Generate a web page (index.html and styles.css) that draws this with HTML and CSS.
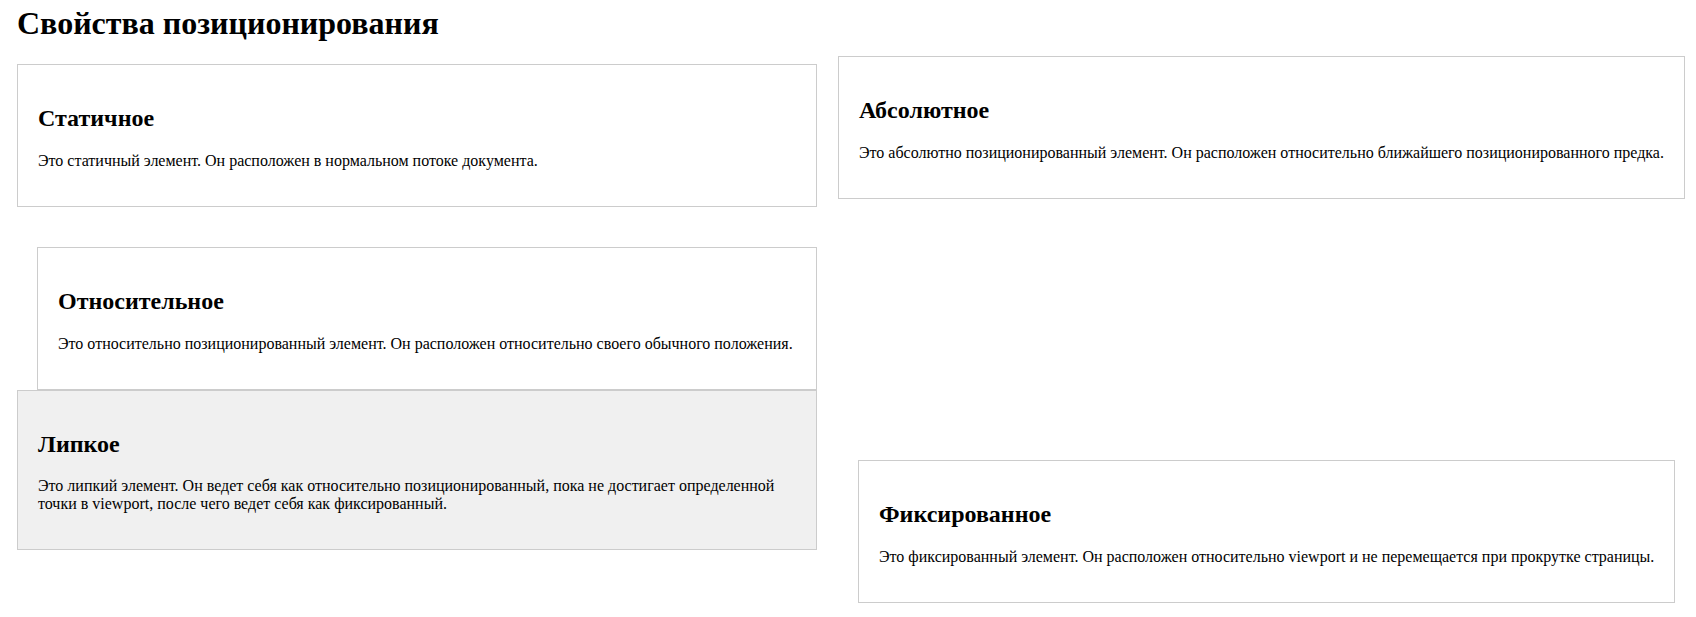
FILE: index.html
```html
<!DOCTYPE html>
<html lang="ru">
<head>
<meta charset="utf-8">
<title>Свойства позиционирования</title>
<link rel="stylesheet" href="styles.css">
</head>
<body>
<h1 class="page-title">Свойства позиционирования</h1>
<div class="layout">
  <div class="col-left">
    <div class="box box-static">
      <h2>Статичное</h2>
      <p>Это статичный элемент. Он расположен в нормальном потоке документа.</p>
    </div>
    <div class="box box-relative">
      <h2>Относительное</h2>
      <p>Это относительно позиционированный элемент. Он расположен относительно своего обычного положения.</p>
    </div>
    <div class="box box-sticky">
      <h2>Липкое</h2>
      <p>Это липкий элемент. Он ведет себя как относительно позиционированный, пока не достигает определенной точки в viewport, после чего ведет себя как фиксированный.</p>
    </div>
  </div>
  <div class="col-right">
    <div class="box box-absolute">
      <h2>Абсолютное</h2>
      <p>Это абсолютно позиционированный элемент. Он расположен относительно ближайшего позиционированного предка.</p>
    </div>
    <div class="box box-fixed">
      <h2>Фиксированное</h2>
      <p>Это фиксированный элемент. Он расположен относительно viewport и не перемещается при прокрутке страницы.</p>
    </div>
  </div>
</div>
</body>
</html>
```
FILE: styles.css
```css
body {
  margin: 0;
  padding: 5px 11px 0 17px;
  font-family: "Liberation Serif", "Times New Roman", serif;
  color: #000;
  background: #fff;
}

.page-title {
  margin: 0;
  font-size: 32px;
  font-weight: bold;
}

.layout {
  display: flex;
  align-items: flex-start;
  gap: 21px;
  margin-top: 14px;
}

.col-left {
  width: 800px;
  flex: none;
  padding-top: 8px;
}

.col-right {
  flex: 1;
  min-width: 0;
}

.box {
  border: 1px solid #ccc;
  padding: 20px;
  background: #fff;
}

.box h2 {
  font-size: 24px;
  margin: 0.83em 0;
}

.box p {
  font-size: 16px;
  margin: 1em 0;
}

.box-relative {
  margin: 40px 0 0 20px;
}

.box-sticky {
  background: #f0f0f0;
}

.box-fixed {
  margin: 261px 10px 0 20px;
  padding-right: 8px;
}

.box-fixed p {
  white-space: nowrap;
}
```
